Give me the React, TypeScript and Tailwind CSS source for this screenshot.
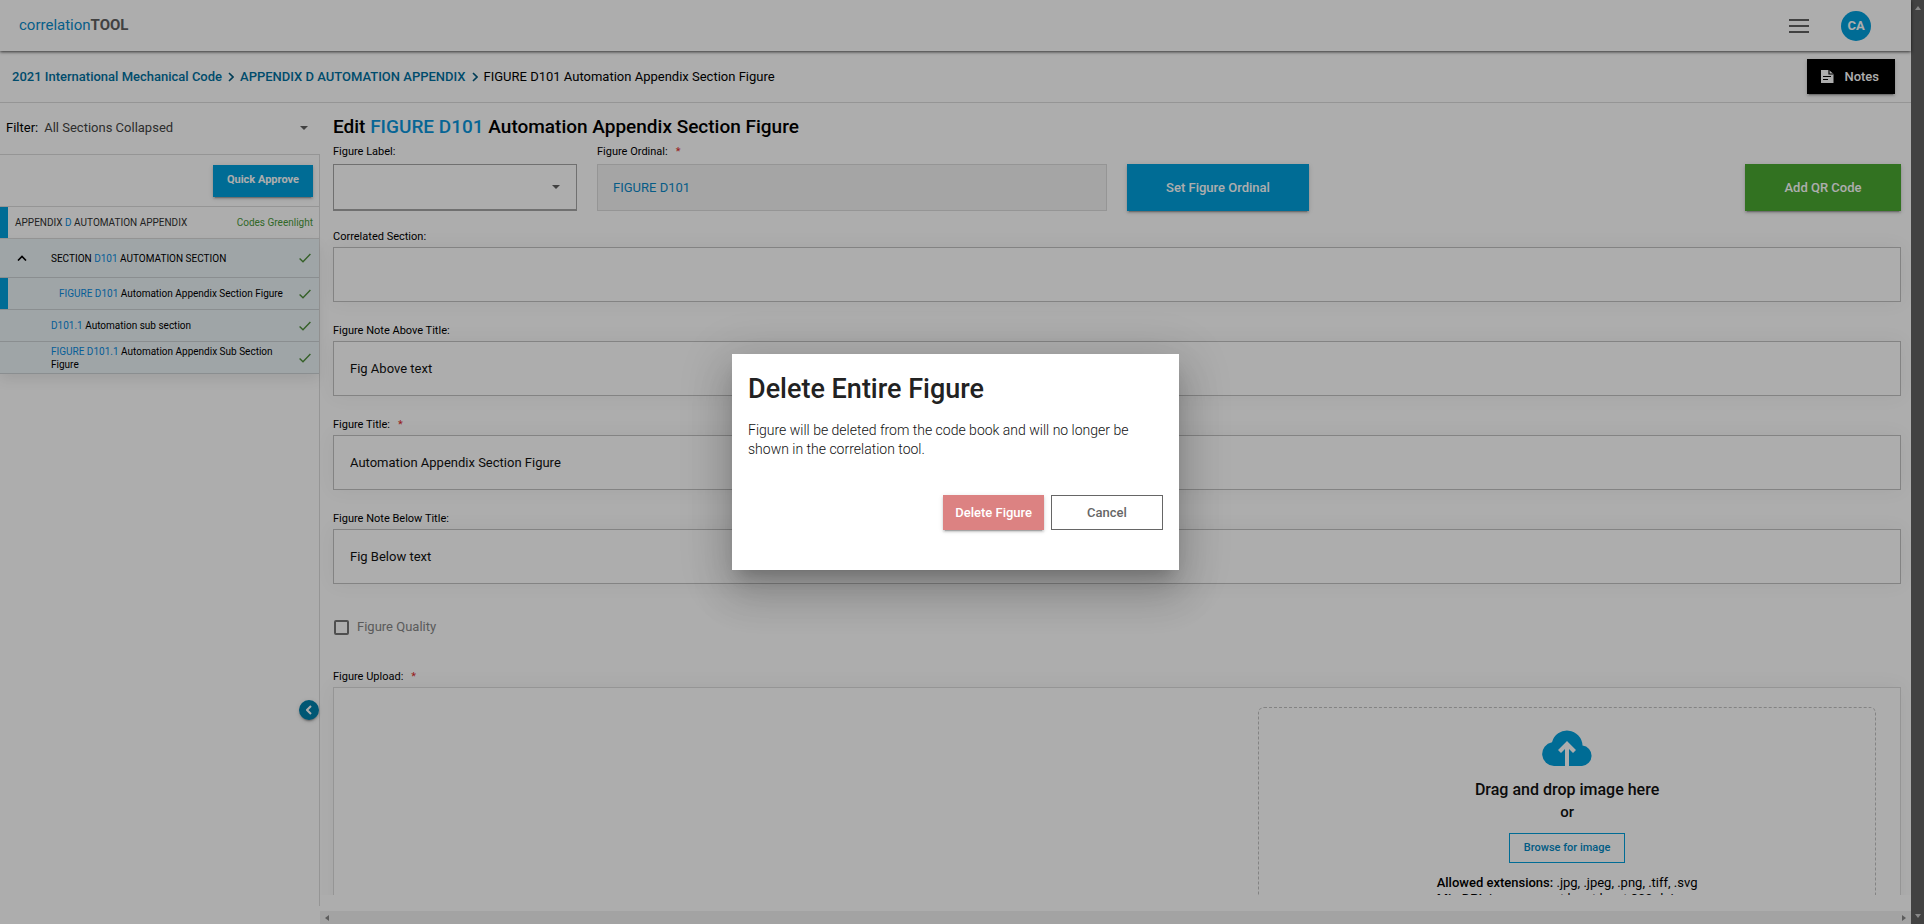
import { useId, type ReactNode } from "react";

const buttonShadow = "shadow-[0_3px_1px_-2px_rgba(0,0,0,0.2),0_2px_2px_0_rgba(0,0,0,0.14),0_1px_5px_0_rgba(0,0,0,0.12)]";

function CaretDown() {
  return (
    <svg viewBox="0 0 8 4" className="h-1 w-2 shrink-0 fill-[#616161]" aria-hidden="true">
      <path d="M0 0h8L4 4z" />
    </svg>
  );
}

function Chevron() {
  return (
    <svg viewBox="0 0 6 10" className="h-2.5 w-1.5 shrink-0 fill-none stroke-[#00597f] stroke-[1.6]" aria-hidden="true">
      <path d="M1 1l4 4-4 4" />
    </svg>
  );
}

function Check() {
  return (
    <svg viewBox="0 0 12 10" className="h-2.5 w-3 shrink-0 fill-none stroke-[#4f8f3c] stroke-[1.4]" aria-hidden="true">
      <path d="M0.6 5.4l3.4 3.4L11.4 1" />
    </svg>
  );
}

function Required() {
  return <span className="ml-2 text-[#e02b2b]">*</span>;
}

function TopBar() {
  return (
    <header className="relative flex h-[51px] shrink-0 items-center justify-between bg-white pl-[19px] pr-10 shadow-[0_1px_3px_rgba(0,0,0,0.7)]">
      <a href="#home" className="text-[15px] text-[#0a8ccb]">
        correlation<span className="font-bold text-[#616161]">TOOL</span>
      </a>
      <div className="flex items-center gap-7">
        <button type="button" aria-label="Menu" className="p-1">
          <svg viewBox="0 0 20 14" className="h-3.5 w-5 fill-[#616161]" aria-hidden="true">
            <path d="M0 0h20v2H0zM0 6h20v2H0zM0 12h20v2H0z" />
          </svg>
        </button>
        <button type="button" className="size-[30px] rounded-full bg-[#009fdc] text-[13px] font-bold text-white">
          CA
        </button>
      </div>
    </header>
  );
}

function BreadcrumbBar() {
  return (
    <div className="flex h-[52px] shrink-0 items-center justify-between border-b border-[#dcdcdc] pl-3 pr-4">
      <nav aria-label="Breadcrumb" className="flex items-center gap-1.5 text-[13px]">
        <a href="#code" className="font-medium text-[#00719f]">2021 International Mechanical Code</a>
        <Chevron />
        <a href="#appendix" className="font-medium text-[#00719f]">APPENDIX D AUTOMATION APPENDIX</a>
        <Chevron />
        <span>FIGURE D101 Automation Appendix Section Figure</span>
      </nav>
      <button type="button" className={`flex h-[35px] items-center gap-2.5 bg-black pl-[13px] pr-4 text-[13px] font-medium text-white ${buttonShadow}`}>
        <svg viewBox="0 0 14 13" className="h-[13px] w-3.5" aria-hidden="true">
          <path d="M1 0h8l4.500 4v9H1z" fill="#fff" />
          <path d="M9 0v4h4.500M3 6.500h8M3 9.500h5" fill="none" stroke="#000" strokeWidth="1.200" />
        </svg>
        Notes
      </button>
    </div>
  );
}

function TreeRow({ active, tall, children }: { active?: boolean; tall?: boolean; children: ReactNode }) {
  return (
    <li className={`flex items-center border-b border-[#ccd2d4] bg-[#ebf3f7] pr-2 ${tall ? "h-[39px]" : "h-8"}`}>
      <span className={`w-2 shrink-0 self-stretch ${active ? "bg-[#009fdc]" : ""}`} />
      {children}
      <Check />
    </li>
  );
}

function Sidebar() {
  const filterId = useId();
  return (
    <aside className="relative mb-[18px] flex w-80 shrink-0 flex-col">
      <div className="flex h-[51px] shrink-0 items-center gap-1.5 pb-0.5 pl-1.5 pr-3 text-[13px]">
        <label htmlFor={filterId}>Filter:</label>
        <select id={filterId} className="grow appearance-none bg-transparent text-[#444]">
          <option>All Sections Collapsed</option>
        </select>
        <CaretDown />
      </div>
      <div className="grow border-r border-t border-[#dcdcdc] text-[10px]">
        <div className="flex h-[52px] items-center justify-end border-b border-[#dcdcdc] pr-1.5">
          <button type="button" className={`h-8 bg-[#009fdc] px-3.5 text-[11px] font-bold text-white ${buttonShadow}`}>
            Quick Approve
          </button>
        </div>
        <div className="flex h-8 items-center border-b border-[#dcdcdc] pr-1.5">
          <span className="w-2 self-stretch bg-[#009fdc]" />
          <a href="#appendix" className="grow pl-[7px] text-[#333]">
            APPENDIX <span className="text-[#0a8ce0]">D</span> AUTOMATION APPENDIX
          </a>
          <span className="text-[#4a9a3a]">Codes Greenlight</span>
        </div>
        <ul className="leading-[13px] shadow-[0_6px_12px_rgba(0,0,0,0.08)]">
          <TreeRow tall>
            <button type="button" aria-label="Collapse section" className="ml-[9px] mr-6">
              <svg viewBox="0 0 10 6" className="h-1.5 w-2.5 fill-none stroke-black stroke-[1.600]" aria-hidden="true">
                <path d="M1 5.500l4-4 4 4" />
              </svg>
            </button>
            <a href="#d101" className="grow">
              SECTION <span className="text-[#0a8ce0]">D101</span> AUTOMATION SECTION
            </a>
          </TreeRow>
          <TreeRow active>
            <a href="#fig-d101" className="grow pl-[51px]">
              <span className="text-[#0a8ce0]">FIGURE D101</span> Automation Appendix Section Figure
            </a>
          </TreeRow>
          <TreeRow>
            <a href="#d101-1" className="grow pl-[43px]">
              <span className="text-[#0a8ce0]">D101.1</span> Automation sub section
            </a>
          </TreeRow>
          <TreeRow>
            <a href="#fig-d101-1" className="grow pl-[43px] pr-3">
              <span className="text-[#0a8ce0]">FIGURE D101.1</span> Automation Appendix Sub Section Figure
            </a>
          </TreeRow>
        </ul>
      </div>
      <button
        type="button"
        aria-label="Hide sidebar"
        className={`absolute right-px top-[597px] flex size-5 items-center justify-center rounded-full bg-[#0080ac] ${buttonShadow}`}
      >
        <svg viewBox="0 0 6 10" className="h-2.5 w-1.5 fill-none stroke-white stroke-2" aria-hidden="true">
          <path d="M5 1L1 5l4 4" />
        </svg>
      </button>
    </aside>
  );
}

function TextField({ label, value, required }: { label: string; value?: string; required?: boolean }) {
  const id = useId();
  return (
    <div className="mb-[19px] flex flex-col">
      <label htmlFor={id} className="flex h-5 items-center text-[11px]">
        {label}
        {required && <Required />}
      </label>
      <input
        id={id}
        defaultValue={value}
        className="h-[55px] border border-[#c2c2c2] bg-white px-4 text-[13px] text-[#111] shadow-[0_0_20px_rgba(0,0,0,0.05)]"
      />
    </div>
  );
}

function UploadPanel() {
  return (
    <div className="flex justify-end border border-[#dcdcdc] px-6 pt-[19px] shadow-[0_0_20px_rgba(0,0,0,0.05)]">
      <div className="flex h-[300px] w-[40.700%] shrink-0 flex-col items-center rounded-md border border-dashed border-[#c2c2c2] pt-[22px]">
        <svg viewBox="0 0 50 36" className="h-9 w-[50px]" aria-hidden="true">
          <path d="M12 36A12 12 0 0 1 10 12.200 15.500 15.500 0 0 1 40.500 15.500 10.300 10.300 0 0 1 40 36z" fill="#009fdc" />
          <path d="M25 11l9 9-3 3-4-4v17h-4V19l-4 4-3-3z" fill="#fff" />
        </svg>
        <p className="mt-3 text-base font-medium leading-6 text-[#111]">Drag and drop image here</p>
        <p className="text-[15px] font-medium leading-5 text-[#111]">or</p>
        <button type="button" className="mt-[11px] h-[30px] border border-[#009fdc] px-3.5 text-[11px] font-medium text-[#0088c4]">
          Browse for image
        </button>
        <div className="mt-3 text-[13px] leading-4">
          <p><span className="font-medium">Allowed extensions:</span> .jpg, .jpeg, .png, .tiff, .svg</p>
          <p><span className="font-medium">Min DPI:</span> images must be at least 300 dpi</p>
        </div>
      </div>
    </div>
  );
}

function EditForm() {
  const labelId = useId();
  const ordinalId = useId();
  return (
    <main className="flex min-w-0 grow flex-col">
      <div className="h-0 grow overflow-hidden pl-[13px] pr-2.5 pt-3">
        <h1 className="text-[19px] font-medium leading-6">
          Edit <span className="text-[#0a96dc]">FIGURE D101</span> Automation Appendix Section Figure
        </h1>
        <div className="mb-4 flex items-end">
          <div className="mr-5 flex w-[244px] flex-col">
            <label htmlFor={labelId} className="flex h-[25px] items-center pt-0.5 text-[11px]">Figure Label:</label>
            <div className="flex h-[47px] items-center border border-b-2 border-[#a5a5a5] bg-white pr-4">
              <select id={labelId} className="h-full grow appearance-none bg-transparent" />
              <CaretDown />
            </div>
          </div>
          <div className="mr-5 flex w-[510px] flex-col">
            <label htmlFor={ordinalId} className="flex h-[25px] items-center pt-0.5 text-[11px]">
              Figure Ordinal:
              <Required />
            </label>
            <input
              id={ordinalId}
              readOnly
              value="FIGURE D101"
              className="h-[47px] border border-[#dcdcdc] bg-[#f4f4f4] px-[15px] text-[13px] text-[#0a88c8]"
            />
          </div>
          <button type="button" className={`h-[47px] w-[182px] bg-[#009fdc] text-[13px] font-medium text-white ${buttonShadow}`}>
            Set Figure Ordinal
          </button>
          <button type="button" className={`ml-auto h-[47px] w-[156px] bg-[#4aa832] text-[13px] font-medium text-white ${buttonShadow}`}>
            Add QR Code
          </button>
        </div>
        <TextField label="Correlated Section:" />
        <TextField label="Figure Note Above Title:" value="Fig Above text" />
        <TextField label="Figure Title:" required value="Automation Appendix Section Figure" />
        <TextField label="Figure Note Below Title:" value="Fig Below text" />
        <label className="mt-[33px] flex items-center gap-2 text-[13px] leading-5 text-[#868686]">
          <input type="checkbox" className="ml-px size-[15px] appearance-none rounded-[2px] border-2 border-[#757575]" />
          Figure Quality
        </label>
        <div className="mt-[30px] flex h-5 items-center text-[11px]">
          Figure Upload:
          <Required />
        </div>
        <UploadPanel />
      </div>
      <div className="mt-4 flex h-[13px] shrink-0 items-center justify-between bg-[#f1f1f1] px-[5px]">
        <svg viewBox="0 0 4 6" className="h-1.5 w-1 fill-[#888]" aria-hidden="true"><path d="M4 0v6L0 3z" /></svg>
        <svg viewBox="0 0 4 6" className="h-1.5 w-1 fill-[#888]" aria-hidden="true"><path d="M0 0v6l4-3z" /></svg>
      </div>
    </main>
  );
}

function DeleteDialog() {
  return (
    <div className="absolute inset-0 flex items-center justify-center bg-black/32">
      <div
        role="dialog"
        aria-modal="true"
        aria-labelledby="delete-title"
        className="h-[216px] w-[447px] bg-white px-4 pt-[17px] text-[#222] shadow-[0_11px_15px_-7px_rgba(0,0,0,0.2),0_24px_38px_3px_rgba(0,0,0,0.14),0_9px_46px_8px_rgba(0,0,0,0.12)]"
      >
        <h2 id="delete-title" className="text-[27px] font-medium leading-9">Delete Entire Figure</h2>
        <p className="mt-3.5 text-sm font-light leading-[19px] text-[#111]">
          Figure will be deleted from the code book and will no longer be<br />
          shown in the correlation tool.
        </p>
        <div className="mt-9 flex justify-end gap-[7px] text-[13px] font-medium">
          <button type="button" className={`h-[35px] bg-[#dc8282] px-3 text-white ${buttonShadow}`}>
            Delete Figure
          </button>
          <button type="button" className="h-[35px] w-28 border border-[#666] text-[#666]">Cancel</button>
        </div>
      </div>
    </div>
  );
}

export default function App() {
  return (
    <div className="flex h-screen overflow-hidden font-['Roboto',sans-serif] text-black">
      <div className="relative flex min-w-0 grow flex-col bg-white">
        <TopBar />
        <BreadcrumbBar />
        <div className="flex min-h-0 grow">
          <Sidebar />
          <EditForm />
        </div>
        <DeleteDialog />
      </div>
      <div className="flex w-[13px] shrink-0 flex-col items-center justify-between bg-[#424242] py-1.5">
        <svg viewBox="0 0 6 4" className="h-1 w-1.5 fill-[#888]" aria-hidden="true"><path d="M0 4h6L3 0z" /></svg>
        <svg viewBox="0 0 6 4" className="h-1 w-1.5 fill-[#888]" aria-hidden="true"><path d="M0 0h6L3 4z" /></svg>
      </div>
    </div>
  );
}
